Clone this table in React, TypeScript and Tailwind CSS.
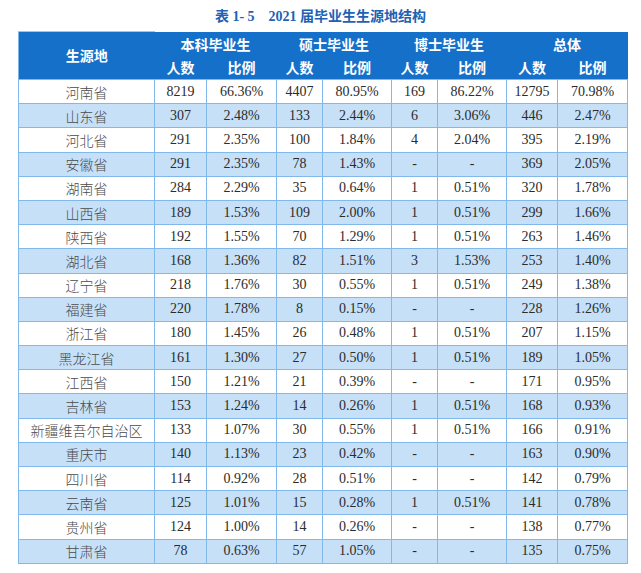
import React from 'react'

const rows: [string, string, string, string, string, string, string, string, string][] = [
  ['河南省', '8219', '66.36%', '4407', '80.95%', '169', '86.22%', '12795', '70.98%'],
  ['山东省', '307', '2.48%', '133', '2.44%', '6', '3.06%', '446', '2.47%'],
  ['河北省', '291', '2.35%', '100', '1.84%', '4', '2.04%', '395', '2.19%'],
  ['安徽省', '291', '2.35%', '78', '1.43%', '-', '-', '369', '2.05%'],
  ['湖南省', '284', '2.29%', '35', '0.64%', '1', '0.51%', '320', '1.78%'],
  ['山西省', '189', '1.53%', '109', '2.00%', '1', '0.51%', '299', '1.66%'],
  ['陕西省', '192', '1.55%', '70', '1.29%', '1', '0.51%', '263', '1.46%'],
  ['湖北省', '168', '1.36%', '82', '1.51%', '3', '1.53%', '253', '1.40%'],
  ['辽宁省', '218', '1.76%', '30', '0.55%', '1', '0.51%', '249', '1.38%'],
  ['福建省', '220', '1.78%', '8', '0.15%', '-', '-', '228', '1.26%'],
  ['浙江省', '180', '1.45%', '26', '0.48%', '1', '0.51%', '207', '1.15%'],
  ['黑龙江省', '161', '1.30%', '27', '0.50%', '1', '0.51%', '189', '1.05%'],
  ['江西省', '150', '1.21%', '21', '0.39%', '-', '-', '171', '0.95%'],
  ['吉林省', '153', '1.24%', '14', '0.26%', '1', '0.51%', '168', '0.93%'],
  ['新疆维吾尔自治区', '133', '1.07%', '30', '0.55%', '1', '0.51%', '166', '0.91%'],
  ['重庆市', '140', '1.13%', '23', '0.42%', '-', '-', '163', '0.90%'],
  ['四川省', '114', '0.92%', '28', '0.51%', '-', '-', '142', '0.79%'],
  ['云南省', '125', '1.01%', '15', '0.28%', '1', '0.51%', '141', '0.78%'],
  ['贵州省', '124', '1.00%', '14', '0.26%', '-', '-', '138', '0.77%'],
  ['甘肃省', '78', '0.63%', '57', '1.05%', '-', '-', '135', '0.75%'],
]

const widths = [136, 52, 70, 46, 69, 46, 69, 51, 70]
const groups = ['本科毕业生', '硕士毕业生', '博士毕业生', '总体']

const cjk = "font-['Noto_Sans_CJK_SC',sans-serif]"
const serif = "font-['Liberation_Serif','Noto_Sans_CJK_SC',serif]"

export default function App() {
  return (
    <div className="w-[641px] h-[573px] bg-white">
      <div className="h-[31px] flex items-center justify-center pt-[1px]">
        <p className={`${serif} text-[14px] font-bold text-[#1d62b3] whitespace-pre`}>
          表 1- 5{'    '}2021 届毕业生生源地结构
        </p>
      </div>
      <div className="pl-[18px]">
        <table className="border-collapse table-fixed w-[609px]">
          <colgroup>
            {widths.map((w, i) => (
              <col key={i} style={{ width: w }} />
            ))}
          </colgroup>
          <thead>
            <tr className="h-[24px] bg-[#1570c9]">
              <th
                rowSpan={2}
                className={`${cjk} border-t border-t-[#9cc8f0] border-l border-l-[#7db6ec] text-[14px] font-bold text-white`}
              >
                生源地
              </th>
              {groups.map((g) => (
                <th key={g} colSpan={2} className={`${cjk} text-[14px] font-bold text-white pt-[2px]`}>
                  {g}
                </th>
              ))}
            </tr>
            <tr className="h-[24px] bg-[#1570c9]">
              {groups.map((g) => (
                <React.Fragment key={g}>
                  <th className={`${cjk} text-[14px] font-bold text-white`}>人数</th>
                  <th className={`${cjk} text-[14px] font-bold text-white`}>比例</th>
                </React.Fragment>
              ))}
            </tr>
          </thead>
          <tbody>
            {rows.map((r, i) => (
              <tr key={r[0]} className={`h-[24.2px] ${i % 2 === 1 ? 'bg-[#c6e0f8]' : 'bg-white'}`}>
                {r.map((c, j) => (
                  <td
                    key={j}
                    className={`border border-[#82b9ec] p-0 text-center text-[14px] leading-none ${
                      j === 0 ? cjk + ' font-light text-[#4a4a4a]' : serif + ' text-[#2b2b2b]'
                    }`}
                  >
                    {c}
                  </td>
                ))}
              </tr>
            ))}
          </tbody>
        </table>
      </div>
    </div>
  )
}
